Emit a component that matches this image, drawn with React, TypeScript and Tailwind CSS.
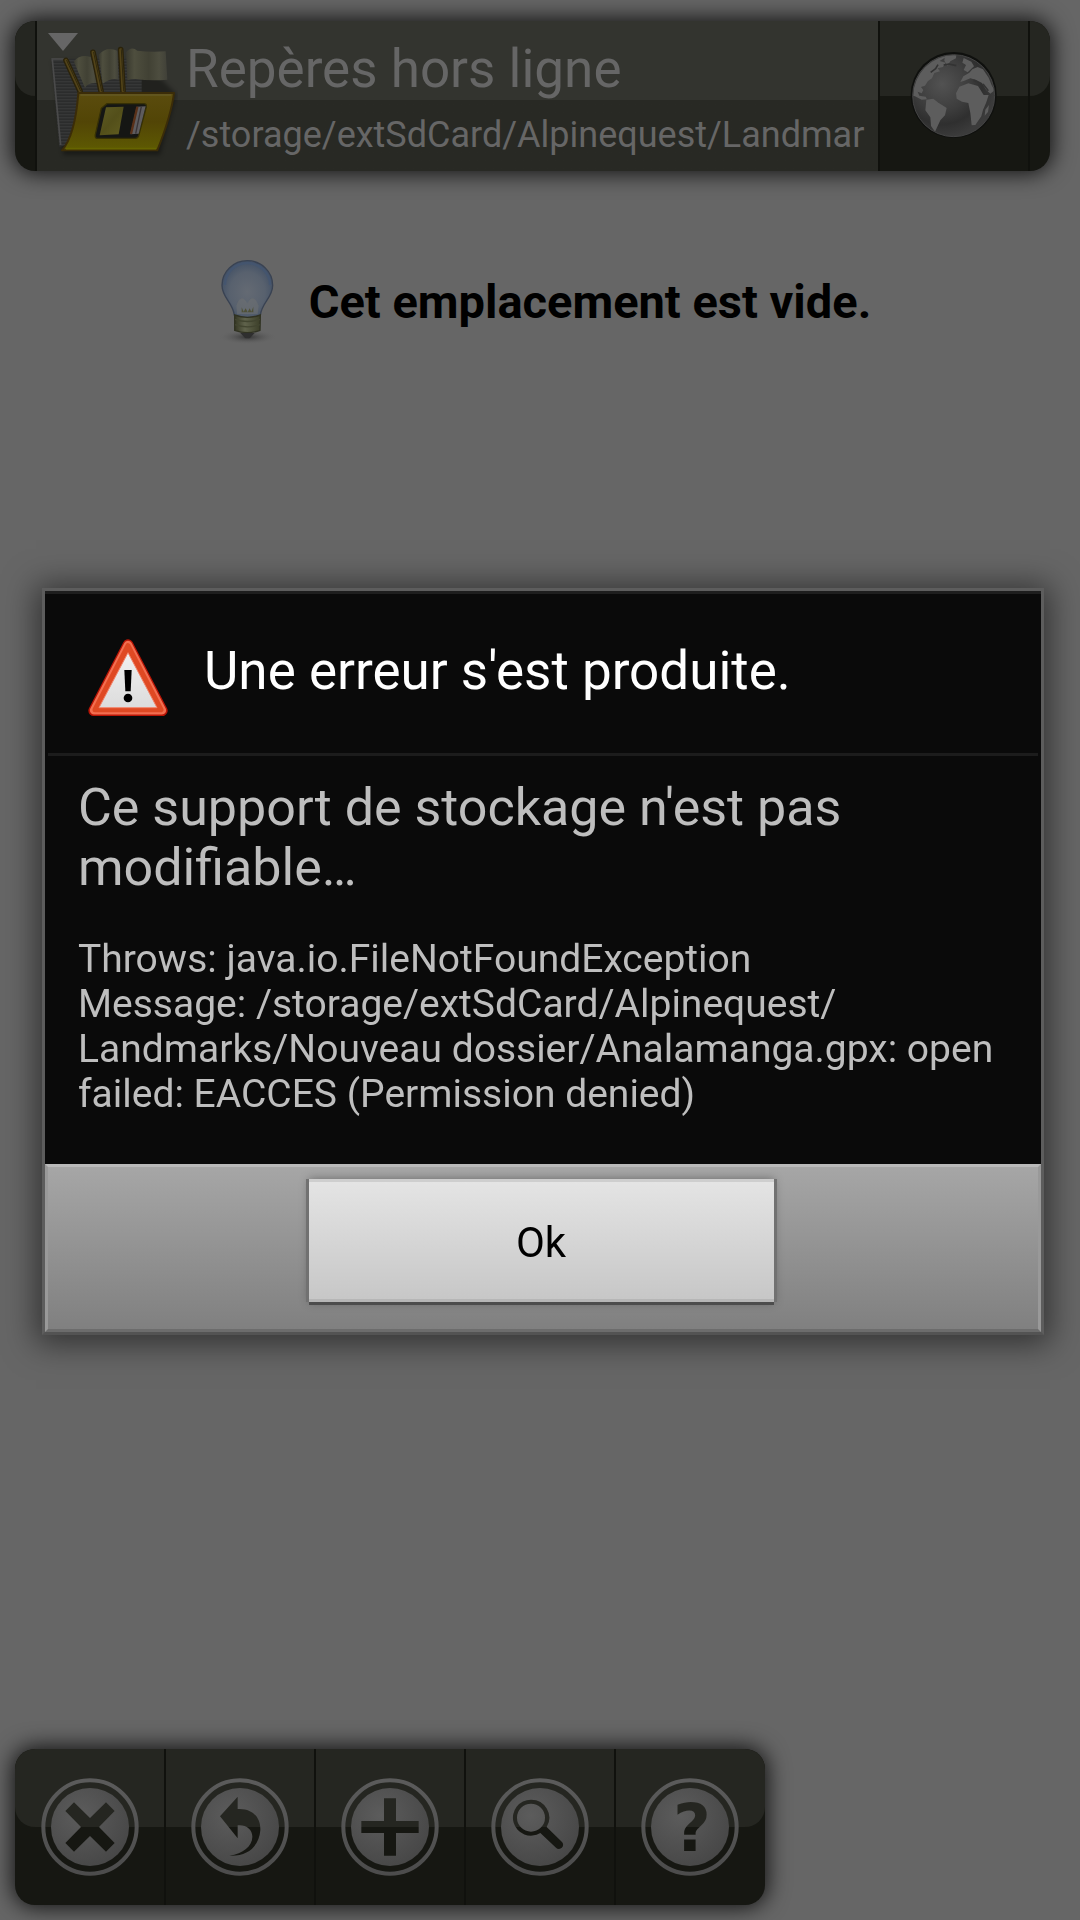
import type { ReactNode } from "react"

const barShadow = "shadow-[0_0_22px_2px_rgba(0,0,0,0.85)]"

// Glossy highlight over the upper half of a bar
const Gloss = () => (
  <div className="pointer-events-none absolute inset-x-0 top-0 h-1/2 rounded-[20px] bg-[#252621]" />
)

const FolderIcon = () => (
  <svg viewBox="144 0 390 450" className="h-[150px] w-[130px] shrink-0" aria-hidden="true">
    <defs>
      <linearGradient id="cover" x1="0" y1="0" x2="0" y2="1">
        <stop offset="0" stopColor="#5b4c0e" />
        <stop offset="0.5" stopColor="#524506" />
        <stop offset="1" stopColor="#5e5a02" />
      </linearGradient>
      <linearGradient id="flag" x1="0" y1="0" x2="1" y2="0">
        <stop offset="0" stopColor="#38382e" />
        <stop offset="0.2" stopColor="#4e4e3e" />
        <stop offset="0.55" stopColor="#414134" />
        <stop offset="0.8" stopColor="#4d4d3f" />
        <stop offset="1" stopColor="#404038" />
      </linearGradient>
      <linearGradient id="card" x1="0" y1="0" x2="1" y2="1">
        <stop offset="0" stopColor="#5e5b24" />
        <stop offset="0.5" stopColor="#534f1a" />
        <stop offset="1" stopColor="#615d20" />
      </linearGradient>
      <pattern id="sheets" width="8" height="9" patternUnits="userSpaceOnUse">
        <rect width="8" height="9" fill="#2b2c2c" />
        <rect width="8" height="4" fill="#363737" />
      </pattern>
      <filter id="soft" x="-20%" y="-20%" width="140%" height="140%">
        <feGaussianBlur stdDeviation="7" />
      </filter>
    </defs>
    <path d="M158 120 L430 120 L530 220 L480 402 L190 402 Z" fill="#000" opacity="0.35" filter="url(#soft)" />
    <path d="M154 113 L425 113 L425 240 L205 370 L178 378 Z" fill="url(#sheets)" />
    <path d="M157 116 L182 372" stroke="#4a4a4a" strokeWidth="5" />
    <path d="M154 114 H205" stroke="#505050" strokeWidth="4" />
    <path d="M221 121 Q242 98 272 108 L294 186 Q262 184 255 200 Z" fill="url(#flag)" />
    <path d="M296 101 Q320 74 352 89 L356 176 Q335 168 308 188 Z" fill="url(#flag)" />
    <path d="M378 94 Q394 74 412 89 Q450 94 497 91 L502 176 Q450 180 407 174 Q391 174 382 178 Z" fill="url(#flag)" />
    <g strokeLinecap="round">
      <path d="M198 118 L240 210 M279 94 L303 210 M362 86 L369 210" stroke="#2a220a" strokeWidth="17" />
      <path d="M198 118 L240 210 M279 94 L303 210 M362 86 L369 210" stroke="#524318" strokeWidth="9" />
      <path d="M200 118 L242 210 M281 94 L305 210 M364 86 L371 210" stroke="#2f280f" strokeWidth="3" />
    </g>
    <path d="M235 216 L522 216 Q514 282 472 388 L186 388 Q225 344 235 216 Z" fill="url(#cover)" stroke="#3b2c08" strokeWidth="6" strokeLinejoin="round" />
    <path d="M241 222 L514 222" stroke="#655924" strokeWidth="4" />
    <path d="M198 383 L468 383" stroke="#666400" strokeWidth="5" />
    <path d="M321 248 L431 248 Q441 248 439 258 L417 340 Q415 352 405 352 L292 352 Q284 352 286 341 L304 262 Z" fill="#151614" stroke="#363005" strokeWidth="4" />
    <path d="M318 259 L371 257 L356 340 L299 343 Z" fill="url(#card)" />
    <path d="M410 257 L437 256 L416 338 L391 340 Z" fill="#5e5c5e" />
    <path d="M412 257 L393 339" stroke="#593018" strokeWidth="7" />
    <path d="M424 257 L407 338" stroke="#3a3538" strokeWidth="4" />
    <path d="M144 36 H234 L189 90 Z" fill="#666" />
  </svg>
)

const GlobeIcon = () => (
  <svg viewBox="0 0 270 270" className="size-[90px]" aria-hidden="true">
    <defs>
      <radialGradient id="sea" cx="0.36" cy="0.36" r="0.65">
        <stop offset="0" stopColor="#525252" />
        <stop offset="0.5" stopColor="#3d3d3d" />
        <stop offset="0.75" stopColor="#2f2f2f" />
        <stop offset="1" stopColor="#3b3b3b" />
      </radialGradient>
      <clipPath id="disc">
        <circle cx="134" cy="134" r="121" />
      </clipPath>
    </defs>
    <circle cx="134" cy="132" r="129" fill="#0f100e" />
    <circle cx="134" cy="134" r="123" fill="url(#sea)" stroke="#444" strokeWidth="3" />
    <g clipPath="url(#disc)" fill="#5d5d5d">
      <path d="M12 134 Q14 78 60 36 L96 12 L111 18 L92 30 L110 35 L102 48 L86 52 L93 61 L76 66 L69 82 L57 90 L48 104 L36 108 L43 117 L38 127 L26 122 L31 134 L50 137 L54 145 L38 146 L18 136 Z" />
      <path d="M108 8 L142 10 L141 22 L124 31 L115 44 L106 29 Z" />
      <path d="M52 146 L73 143 L88 155 L104 165 L113 171 L108 193 L94 208 L85 227 L78 242 L66 225 L64 199 L49 178 Z" />
      <path d="M164 21 L187 32 L195 46 L176 64 L164 57 L171 42 L160 35 Z" />
      <path d="M154 93 L163 76 L181 65 L190 55 L206 48 L222 55 L239 80 L248 103 L257 118 L244 128 L231 116 L219 96 L200 86 L184 82 L166 89 Z" />
      <path d="M151 107 L178 97 L207 105 L224 132 L239 132 L232 154 L222 177 L217 196 L199 222 L188 223 L184 186 L178 156 L159 152 L143 143 L141 127 Z" />
      <path d="M229 176 L240 162 L237 183 L227 194 Z" />
    </g>
    <g fill="none" stroke="#333" strokeWidth="5" strokeLinejoin="round">
      <path d="M65 64 L80 53 L87 41 M104 42 L120 39 L142 44 M194 88 L207 94 M222 99 L238 119" />
    </g>
  </svg>
)

const BulbIcon = () => (
  <svg viewBox="0 0 180 255" className="h-[85px] w-[60px] shrink-0" aria-hidden="true">
    <defs>
      <radialGradient id="glass" cx="0.5" cy="0.55" r="0.58">
        <stop offset="0" stopColor="#646a73" />
        <stop offset="0.6" stopColor="#58616e" />
        <stop offset="1" stopColor="#3f4e64" />
      </radialGradient>
      <linearGradient id="socket">
        <stop offset="0" stopColor="#343623" />
        <stop offset="0.4" stopColor="#60634c" />
        <stop offset="1" stopColor="#3b3e28" />
      </linearGradient>
      <radialGradient id="floor">
        <stop offset="0" stopColor="#333" />
        <stop offset="1" stopColor="#666" stopOpacity="0" />
      </radialGradient>
    </defs>
    <ellipse cx="92" cy="234" rx="88" ry="22" fill="url(#floor)" />
    <path d="M91 5 C49 5 15 38 15 79 C15 117 48 130 52 169 Q91 184 130 169 C134 130 167 117 167 79 C167 38 133 5 91 5 Z" fill="url(#glass)" stroke="#394252" strokeWidth="4" />
    <path d="M91 12 C54 12 24 42 24 78 M91 12 C128 12 159 42 159 78" fill="none" stroke="#435672" strokeWidth="7" opacity="0.7" />
    <path d="M58 140 Q72 100 91 133 Q110 100 125 140 L122 165 H60 Z" fill="#707171" opacity="0.5" />
    <path d="M74 160 V145 L80 158 L86 148 L92 160 L98 148 L103 158 L109 143 V160 Z" fill="#4f5138" />
    <path d="M53 168 Q91 182 130 168 L129 214 Q91 228 53 214 Z" fill="url(#socket)" stroke="#303222" strokeWidth="4" />
    <path d="M54 181 Q91 194 129 181 M54 197 Q91 210 129 197" fill="none" stroke="#424530" strokeWidth="4" />
    <path d="M70 222 H113 L98 238 H85 Z" fill="#2f2f2f" />
  </svg>
)

const WarningIcon = () => (
  <svg viewBox="0 0 240 234" className="mt-2 h-[78px] w-[80px] shrink-0" aria-hidden="true">
    <defs>
      <linearGradient id="sign" x1="0" y1="0" x2="0" y2="1">
        <stop offset="0" stopColor="#f0f0f0" />
        <stop offset="1" stopColor="#dcdcdc" />
      </linearGradient>
    </defs>
    <path d="M120 17 L223 215 H17 Z" fill="#b81405" stroke="#b81405" strokeWidth="32" strokeLinejoin="round" />
    <path d="M120 18 L222 214 H18 Z" fill="#f36e50" stroke="#f36e50" strokeWidth="25" strokeLinejoin="round" />
    <path d="M120 20 L219 212 H21 Z" fill="#df4923" stroke="#df4923" strokeWidth="15" strokeLinejoin="round" />
    <path d="M120 41 L207 206 H33 Z" fill="url(#sign)" stroke="#f2856c" strokeWidth="3" />
    <path d="M109 93 H131 L128 157 H112 Z" fill="#000" />
    <circle cx="120" cy="177" r="13" fill="#000" />
  </svg>
)

const RoundIcon = ({ id, children }: { id: string; children: ReactNode }) => (
  <svg viewBox="-150 -150 300 300" className="size-[100px]" aria-hidden="true">
    <defs>
      <radialGradient id={`${id}-disc`} cx="0.38" cy="0.35" r="0.7">
        <stop offset="0" stopColor="#5c5c5c" />
        <stop offset="1" stopColor="#474747" />
      </radialGradient>
      <linearGradient id={`${id}-ring`} x1="0" y1="0" x2="0" y2="1">
        <stop offset="0" stopColor="#5b5b5b" />
        <stop offset="1" stopColor="#4c4c4c" />
      </linearGradient>
      <linearGradient id={`${id}-cut`} gradientUnits="userSpaceOnUse" x1="0" y1="-150" x2="0" y2="150">
        <stop offset="0.5" stopColor="#252621" />
        <stop offset="0.5" stopColor="#161712" />
      </linearGradient>
    </defs>
    <circle r="140" fill="none" stroke={`url(#${id}-ring)`} strokeWidth="12" />
    <circle r="117" fill={`url(#${id}-disc)`} />
    <g fill={`url(#${id}-cut)`}>{children}</g>
  </svg>
)

const tools = [
  {
    label: "Fermer",
    icon: (
      <RoundIcon id="close">
        <path d="M-74 -48 L-48 -74 L0 -27 L48 -74 L74 -48 L27 0 L74 48 L48 74 L0 27 L-48 74 L-74 48 L-27 0 Z" />
      </RoundIcon>
    ),
  },
  {
    label: "Retour",
    icon: (
      <RoundIcon id="back">
        <path d="M-60 -32 L-7 -91 V-54 C40 -57 63 -25 61 10 C58 55 25 89 -32 86 C10 80 36 58 37 30 C38 8 18 -8 -7 -5 V34 Z" />
      </RoundIcon>
    ),
  },
  {
    label: "Ajouter",
    icon: (
      <RoundIcon id="add">
        <path d="M-18 -86 H18 V-18 H86 V18 H18 V86 H-18 V18 H-86 V-18 H-18 Z" />
      </RoundIcon>
    ),
  },
  {
    label: "Rechercher",
    icon: (
      <RoundIcon id="search">
        <path
          fillRule="evenodd"
          d="M-27 -82 A54 54 0 1 0 1 18 L48 62 A11 11 0 0 0 66 45 L20 0 A54 54 0 0 0 -27 -82 Z M-27 -70 A42 42 0 1 1 -27 14 A42 42 0 1 1 -27 -70 Z"
        />
      </RoundIcon>
    ),
  },
  {
    label: "Aide",
    icon: (
      <RoundIcon id="help">
        <text x="6" y="72" textAnchor="middle" className="font-['DejaVu_Sans'] text-[196px] font-bold">
          ?
        </text>
      </RoundIcon>
    ),
  },
]

const Header = () => (
  <header className={`relative mr-[15px] flex h-[150px] rounded-[20px] bg-[#161712] ${barShadow}`}>
    <Gloss />
    <div className="relative w-[22px] border-r-2 border-[#10110d]" />
    <button
      type="button"
      className="relative flex min-w-0 flex-1 bg-linear-to-b from-[#33342f] from-53% to-[#282924] to-53% pl-[11px] text-left text-[#666]"
    >
      <FolderIcon />
      <span className="ml-2 min-w-0 flex-1 overflow-hidden whitespace-nowrap pt-[17px]">
        <span className="block text-[53px] leading-[63px]">Repères hors ligne</span>
        <span className="mt-[13px] block text-[36px] leading-[42px]">/storage/extSdCard/Alpinequest/Landmar</span>
      </span>
    </button>
    <button
      type="button"
      aria-label="Carte"
      className="relative flex w-[152px] items-center justify-center border-x-2 border-[#10110d]"
    >
      <GlobeIcon />
    </button>
    <div className="w-5" />
  </header>
)

const ErrorDialog = () => (
  <div className="fixed inset-0 flex items-center pt-[3px] pr-9 pl-[42px]">
    <section
      role="alertdialog"
      aria-labelledby="error-title"
      className="w-full border-3 border-[#5d5d5d] border-b-[#535353] bg-[#0a0a0a] shadow-[0_3px_30px_6px_rgba(0,0,0,0.5)]"
    >
      <div className="border-t-3 border-[#1e1e1e] px-[3px]">
        <div className="flex h-[162px] items-center border-b-3 border-[#1c1c1c] pl-10">
          <WarningIcon />
          <h2 id="error-title" className="mb-1 ml-9 text-[53px] leading-[63px] text-white">
            Une erreur s'est produite.
          </h2>
        </div>
      </div>
      <div className="px-[33px] pt-[22px] pb-[47px] text-[#bebebe]">
        <p className="text-[52px] leading-[60px]">
          Ce support de stockage n'est pas
          <br />
          modifiable…
        </p>
        <p className="mt-[39px] text-[39px] leading-[45px]">
          Throws: java.io.FileNotFoundException
          <br />
          Message: /storage/extSdCard/Alpinequest/
          <br />
          Landmarks/Nouveau dossier/Analamanga.gpx: open
          <br />
          failed: EACCES (Permission denied)
        </p>
      </div>
      <div className="flex h-[168px] justify-center border-3 border-x-[#999] border-t-[#b9b9b9] border-b-[#6c6c6c] bg-linear-to-b from-[#a6a6a6] to-[#808080] pt-3 pr-1">
        <button
          type="button"
          className="h-[123px] w-[465px] border-y-3 border-t-[#cecece] border-b-[#b6b6b6] bg-linear-to-b from-[#e4e4e4] to-[#c7c7c7] pt-1 text-[42px] text-black shadow-[0_3px_0_#4c4c4c,3px_0_0_#717171,-3px_0_0_#717171,0_0_9px_rgba(0,0,0,0.35)]"
        >
          Ok
        </button>
      </div>
    </section>
  </div>
)

export default function App() {
  return (
    <div className="flex min-h-screen flex-col bg-[#666] px-[15px] pt-[21px] pb-[15px] font-[Roboto,sans-serif]">
      <Header />
      <main className="flex flex-1 items-start justify-center pt-[88px] pl-2">
        <div className="flex items-center gap-8">
          <BulbIcon />
          <p className="text-[47px] leading-[56px] font-bold text-black">Cet emplacement est vide.</p>
        </div>
      </main>
      <nav className={`relative flex self-start rounded-[20px] bg-[#161712] ${barShadow}`}>
        <Gloss />
        {tools.map((tool) => (
          <button
            key={tool.label}
            type="button"
            aria-label={tool.label}
            className="relative flex h-[156px] w-[150px] items-center justify-center shadow-[1px_0_0_#10110d,inset_-1px_0_0_#10110d] last:shadow-none"
          >
            {tool.icon}
          </button>
        ))}
      </nav>
      <ErrorDialog />
    </div>
  )
}
